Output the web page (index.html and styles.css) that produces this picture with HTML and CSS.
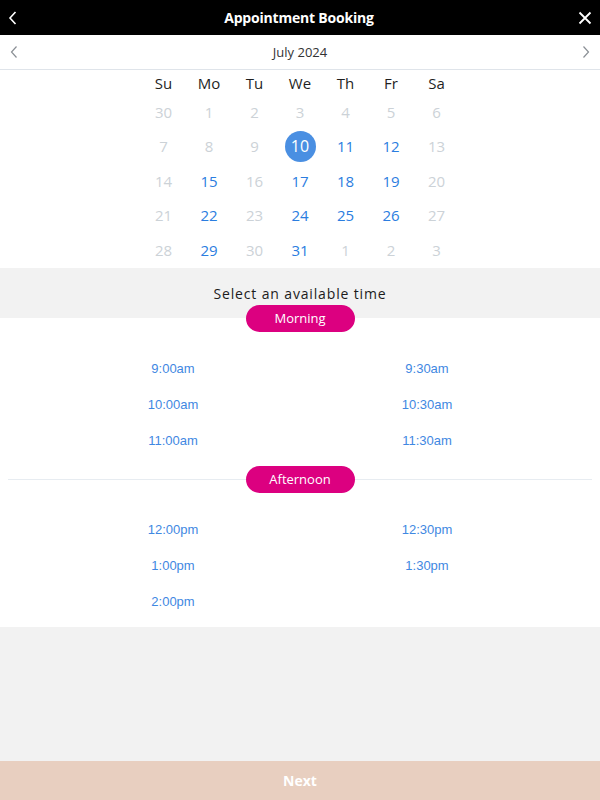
FILE: index.html
```html
<!DOCTYPE html>
<html lang="en">
<head>
<meta charset="utf-8">
<title>Appointment Booking</title>
<link rel="stylesheet" href="styles.css">
</head>
<body>
<div class="app">
  <header class="topbar">
    <button class="icon-btn" aria-label="Back">
      <svg width="10" height="14" viewBox="0 0 10 14"><path d="M7.5 1 L2 7 L7.5 13" fill="none" stroke="#fff" stroke-width="1.6"/></svg>
    </button>
    <h1 class="title">Appointment Booking</h1>
    <button class="icon-btn" aria-label="Close">
      <svg width="14" height="14" viewBox="0 0 14 14"><path d="M1.5 1.5 L12.5 12.5 M12.5 1.5 L1.5 12.5" fill="none" stroke="#fff" stroke-width="1.8"/></svg>
    </button>
  </header>

  <div class="month-nav">
    <button class="nav-btn" aria-label="Previous month">
      <svg width="8" height="12" viewBox="0 0 8 12"><path d="M6.5 0.5 L1.5 6 L6.5 11.5" fill="none" stroke="#8a8f95" stroke-width="1.2"/></svg>
    </button>
    <div class="month">July 2024</div>
    <button class="nav-btn" aria-label="Next month">
      <svg width="8" height="12" viewBox="0 0 8 12"><path d="M1.5 0.5 L6.5 6 L1.5 11.5" fill="none" stroke="#8a8f95" stroke-width="1.2"/></svg>
    </button>
  </div>

  <div class="calendar">
    <div class="wd">Su</div><div class="wd">Mo</div><div class="wd">Tu</div><div class="wd">We</div><div class="wd">Th</div><div class="wd">Fr</div><div class="wd">Sa</div>

    <div class="d off">30</div><div class="d off">1</div><div class="d off">2</div><div class="d off">3</div><div class="d off">4</div><div class="d off">5</div><div class="d off">6</div>

    <div class="d off">7</div><div class="d off">8</div><div class="d off">9</div><div class="d sel"><span>10</span></div><div class="d on">11</div><div class="d on">12</div><div class="d off">13</div>

    <div class="d off">14</div><div class="d on">15</div><div class="d off">16</div><div class="d on">17</div><div class="d on">18</div><div class="d on">19</div><div class="d off">20</div>

    <div class="d off">21</div><div class="d on">22</div><div class="d off">23</div><div class="d on">24</div><div class="d on">25</div><div class="d on">26</div><div class="d off">27</div>

    <div class="d off">28</div><div class="d on">29</div><div class="d off">30</div><div class="d on">31</div><div class="d off">1</div><div class="d off">2</div><div class="d off">3</div>
  </div>

  <div class="time-head">Select an available time</div>

  <div class="times">
    <div class="divider divider-plain"><span class="pill">Morning</span></div>
    <div class="slots">
      <a class="slot">9:00am</a><a class="slot">9:30am</a>
      <a class="slot">10:00am</a><a class="slot">10:30am</a>
      <a class="slot">11:00am</a><a class="slot">11:30am</a>
    </div>
    <div class="divider"><span class="pill">Afternoon</span></div>
    <div class="slots">
      <a class="slot">12:00pm</a><a class="slot">12:30pm</a>
      <a class="slot">1:00pm</a><a class="slot">1:30pm</a>
      <a class="slot">2:00pm</a>
    </div>
  </div>

  <div class="spacer"></div>

  <button class="next-btn">Next</button>
</div>
</body>
</html>
```

FILE: styles.css
```css
* { box-sizing: border-box; }

html, body {
  margin: 0;
  padding: 0;
  background: #f2f2f2;
}

body {
  font-family: "Open Sans", "DejaVu Sans", sans-serif;
}

.app {
  display: flex;
  flex-direction: column;
  height: 800px;
  width: 600px;
}

button {
  font-family: inherit;
  border: 0;
  background: none;
  padding: 0;
  cursor: pointer;
}

.topbar {
  height: 35px;
  background: #000;
  display: flex;
  align-items: center;
  justify-content: space-between;
  padding: 0 8px 0 6px;
}

.icon-btn {
  width: 14px;
  height: 14px;
  display: flex;
  align-items: center;
  justify-content: center;
}

.title {
  margin: 0;
  color: #fff;
  font-size: 14px;
  font-weight: 700;
  letter-spacing: -0.2px;
}

.month-nav {
  height: 35px;
  background: #fff;
  border-bottom: 1px solid #dfe4ea;
  display: flex;
  align-items: center;
  justify-content: space-between;
  padding: 0 10px 0 10px;
}

.nav-btn {
  width: 8px;
  height: 12px;
  display: flex;
}

.month {
  font-size: 13px;
  color: #333;
}

.calendar {
  background: #fff;
  display: grid;
  grid-template-columns: repeat(7, 45.5px);
  grid-template-rows: 25px repeat(5, 34.5px);
  justify-content: center;
  padding-bottom: 0.5px;
}

.wd {
  display: flex;
  align-items: center;
  justify-content: center;
  font-size: 15px;
  color: #1f1f1f;
  padding-top: 1px;
}

.d {
  display: flex;
  align-items: center;
  justify-content: center;
  font-size: 15px;
  padding-bottom: 1px;
}

.off { color: #ccd2d7; }
.on { color: #2b7de0; }

.sel span {
  width: 31px;
  height: 31px;
  border-radius: 50%;
  background: #4a8fe2;
  color: #fff;
  display: flex;
  align-items: center;
  justify-content: center;
  font-size: 16px;
}

.time-head {
  height: 50px;
  display: flex;
  align-items: center;
  justify-content: center;
  font-size: 14px;
  letter-spacing: 0.85px;
  color: #1c1c1c;
  padding-top: 1px;
}

.times {
  background: #fff;
  padding: 0 8px 7.5px;
}

.divider {
  position: relative;
  display: flex;
  justify-content: center;
  height: 27px;
}

.divider::before {
  content: "";
  position: absolute;
  left: 0;
  right: 0;
  top: 13px;
  height: 1px;
  background: #e7ecf1;
}

.divider-plain {
  margin-top: -13.5px;
}

.divider-plain::before {
  display: none;
}

.pill {
  position: relative;
  width: 109px;
  height: 27px;
  border-radius: 14px;
  background: #dc0080;
  color: #fff;
  font-size: 13px;
  display: flex;
  align-items: center;
  justify-content: center;
}

.slots {
  display: grid;
  grid-template-columns: 254px 254px;
  justify-content: center;
  grid-auto-rows: 36px;
  padding-top: 18.5px;
}

.slots + .divider { margin-top: 7.5px; }

.slot {
  display: flex;
  align-items: center;
  justify-content: center;
  font-family: "Liberation Sans", Arial, sans-serif;
  font-size: 13px;
  color: #3f88e2;
}

.spacer {
  flex: 1;
}

.next-btn {
  height: 39px;
  width: 100%;
  background: #e8cfc0;
  color: #fff;
  font-size: 14px;
  font-weight: 700;
  display: flex;
  align-items: center;
  justify-content: center;
}
```
